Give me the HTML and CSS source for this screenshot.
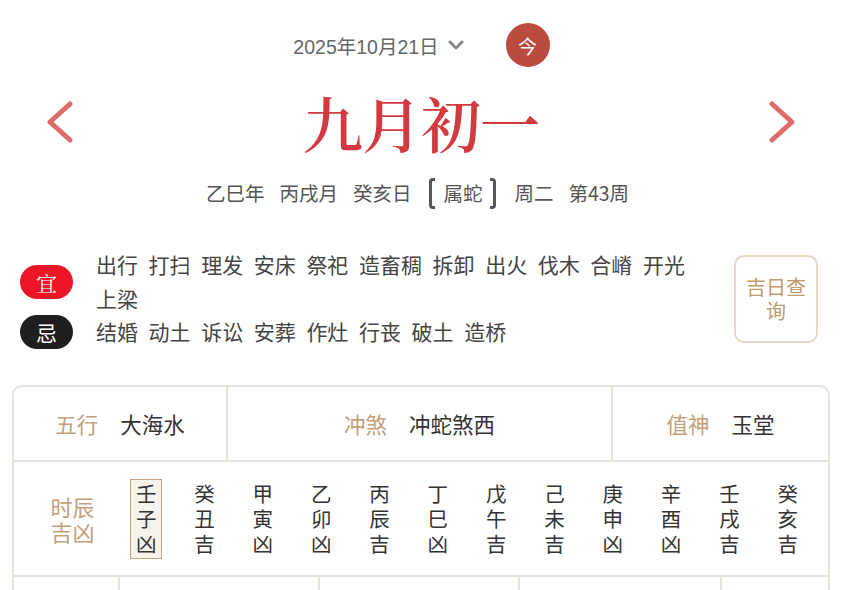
FILE: index.html
```html
<!DOCTYPE html>
<html lang="zh">
<head>
<meta charset="utf-8">
<title>黄历</title>
<link rel="stylesheet" href="styles.css">
</head>
<body>
<div class="page">
  <div class="date-row">
    <span class="date-text">2025年10月21日</span>
    <svg class="date-caret" width="16" height="10" viewBox="0 0 16 10"><polyline points="2,2 8,8 14,2" fill="none" stroke="#8a8a8a" stroke-width="3" stroke-linecap="round" stroke-linejoin="round"/></svg>
    <span class="today">今</span>
  </div>

  <div class="title-row">
    <svg class="nav" width="28" height="42" viewBox="0 0 28 42"><polyline points="24,3 4,21 24,39" fill="none" stroke="#e06b6b" stroke-width="5" stroke-linecap="round" stroke-linejoin="round"/></svg>
    <h1 class="lunar">九月初一</h1>
    <svg class="nav" width="28" height="42" viewBox="0 0 28 42"><polyline points="4,3 24,21 4,39" fill="none" stroke="#e06b6b" stroke-width="5" stroke-linecap="round" stroke-linejoin="round"/></svg>
  </div>

  <div class="ganzhi">
    <span>乙巳年</span>
    <span>丙戌月</span>
    <span>癸亥日</span>
    <span class="zodiac"><i class="br br-l"></i>属蛇<i class="br br-r"></i></span>
    <span>周二</span>
    <span>第43周</span>
  </div>

  <div class="yiji">
    <div class="yiji-list">
      <div class="yiji-row">
        <span class="badge badge-yi">宜</span>
        <div class="items"><span>出行</span><span>打扫</span><span>理发</span><span>安床</span><span>祭祀</span><span>造畜稠</span><span>拆卸</span><span>出火</span><span>伐木</span><span>合嵴</span><span>开光</span><span>上梁</span></div>
      </div>
      <div class="yiji-row">
        <span class="badge badge-ji">忌</span>
        <div class="items"><span>结婚</span><span>动土</span><span>诉讼</span><span>安葬</span><span>作灶</span><span>行丧</span><span>破土</span><span>造桥</span></div>
      </div>
    </div>
    <button class="lucky-btn">吉日查<br>询</button>
  </div>

  <div class="table">
    <div class="row row-info">
      <div class="cell"><span class="label">五行</span><span class="value">大海水</span></div>
      <div class="cell"><span class="label">冲煞</span><span class="value">冲蛇煞西</span></div>
      <div class="cell"><span class="label">值神</span><span class="value">玉堂</span></div>
    </div>
    <div class="row row-hours">
      <div class="hours-label">时辰<br>吉凶</div>
      <div class="hours">
        <div class="hour current">壬<br>子<br>凶</div>
        <div class="hour">癸<br>丑<br>吉</div>
        <div class="hour">甲<br>寅<br>凶</div>
        <div class="hour">乙<br>卯<br>凶</div>
        <div class="hour">丙<br>辰<br>吉</div>
        <div class="hour">丁<br>巳<br>凶</div>
        <div class="hour">戊<br>午<br>吉</div>
        <div class="hour">己<br>未<br>吉</div>
        <div class="hour">庚<br>申<br>凶</div>
        <div class="hour">辛<br>酉<br>凶</div>
        <div class="hour">壬<br>戌<br>吉</div>
        <div class="hour">癸<br>亥<br>吉</div>
      </div>
    </div>
    <div class="row row-more">
      <div class="cell"></div>
      <div class="cell"></div>
      <div class="cell"></div>
      <div class="cell"></div>
      <div class="cell"></div>
    </div>
  </div>
</div>
</body>
</html>
```

FILE: styles.css
```css
* { box-sizing: border-box; }
html, body { margin: 0; padding: 0; background: #fff; }
body {
  font-family: "Liberation Sans", "Noto Sans CJK SC", sans-serif;
  color: #444;
  width: 845px;
  height: 590px;
  overflow: hidden;
}

.date-row {
  display: flex;
  align-items: center;
  justify-content: center;
  height: 44px;
  margin-top: 23px;
  padding-right: 2px;
}
.date-text {
  font-size: 19.5px;
  color: #666;
}
.date-caret { margin-left: 9px; }
.today {
  margin-left: 42px;
  width: 44px;
  height: 44px;
  border-radius: 50%;
  background: #bb4a3f;
  color: #fff;
  font-family: "Noto Sans CJK SC", sans-serif;
  font-size: 19px;
  display: flex;
  align-items: center;
  justify-content: center;
}

.title-row {
  display: flex;
  align-items: center;
  justify-content: space-between;
  margin-top: 19px;
  height: 72px;
  padding: 0 49px 0 46px;
}
.lunar {
  margin: 0;
  font-family: "Noto Serif CJK SC", "Source Han Serif SC", serif;
  font-weight: 600;
  font-size: 60px;
  line-height: 72px;
  color: #d33a3f;
  letter-spacing: -1px;
}

.ganzhi {
  margin-top: 20px;
  height: 30px;
  display: flex;
  align-items: center;
  justify-content: center;
  gap: 15px;
  font-family: "Noto Sans CJK SC", sans-serif;
  font-size: 19.5px;
  color: #555;
  padding-right: 10px;
}
.ganzhi > span { line-height: 30px; }
.zodiac {
  display: flex;
  align-items: center;
  gap: 8px;
  margin: 0 3px;
}
.br {
  display: block;
  width: 6px;
  height: 31px;
  border: 3px solid #555;
}
.br-l { border-right: none; border-radius: 4px 0 0 4px; }
.br-r { border-left: none; border-radius: 0 4px 4px 0; }

.yiji {
  margin-top: 40px;
  display: flex;
  align-items: center;
  padding: 0 27px 0 20px;
}
.yiji-list {
  width: 686px;
}
.yiji-row {
  display: flex;
  align-items: center;
}
.badge {
  flex: none;
  width: 53px;
  height: 34px;
  border-radius: 17px;
  color: #fff;
  font-family: "Noto Sans CJK SC", sans-serif;
  font-size: 21px;
  display: flex;
  align-items: center;
  justify-content: center;
}
.badge-yi {
  background: #eb1526;
  font-family: "Noto Serif CJK SC", serif;
}
.badge-ji { background: #1f1f22; }
.items {
  margin-left: 23px;
  width: 610px;
  font-family: "Noto Sans CJK SC", sans-serif;
  font-size: 21px;
  line-height: 33.5px;
  color: #444;
}
.items span {
  display: inline-block;
  margin-right: 10.6px;
}
.lucky-btn {
  margin-left: auto;
  width: 84px;
  height: 88px;
  border: 2px solid #e7d8c5;
  border-radius: 10px;
  background: #fff;
  color: #c09a70;
  font-family: "Noto Sans CJK SC", sans-serif;
  font-size: 20px;
  line-height: 24px;
  padding: 0;
}

.table {
  margin: 36px 15px 0 12px;
  border: 2px solid #e6e3dc;
  border-bottom: none;
  border-radius: 10px 10px 0 0;
  font-family: "Noto Sans CJK SC", sans-serif;
}
.row { display: flex; }
.row-info {
  height: 75px;
  border-bottom: 2px solid #e6e3dc;
}
.row-info .cell {
  display: flex;
  align-items: center;
  justify-content: center;
  gap: 22px;
  font-size: 21.5px;
}
.row-info .cell:nth-child(1) { width: 214px; border-right: 2px solid #e6e3dc; }
.row-info .cell:nth-child(2) { width: 385px; border-right: 2px solid #e6e3dc; }
.row-info .cell:nth-child(3) { flex: 1; }
.label { color: #c49f7b; }
.value { color: #333; }

.row-hours {
  height: 115px;
  border-bottom: 2px solid #e6e3dc;
  align-items: center;
}
.hours-label {
  width: 103px;
  padding-left: 14px;
  text-align: center;
  font-size: 22px;
  line-height: 25px;
  color: #c49f7b;
}
.hours {
  display: grid;
  grid-template-columns: repeat(12, 58.33px);
}
.hour {
  justify-self: center;
  font-size: 20.5px;
  line-height: 25px;
  color: #333;
  padding: 1px 5px 2px;
  border: 1px solid transparent;
}
.hour.current {
  border-color: #c9a37e;
  background: #f6f2ec;
}

.row-more { height: 60px; }
.row-more .cell { border-right: 2px solid #e6e3dc; }
.row-more .cell:nth-child(1) { width: 106px; }
.row-more .cell:nth-child(2) { width: 200px; }
.row-more .cell:nth-child(3) { width: 200px; }
.row-more .cell:nth-child(4) { width: 202px; }
.row-more .cell:nth-child(5) { flex: 1; border-right: none; }
```
